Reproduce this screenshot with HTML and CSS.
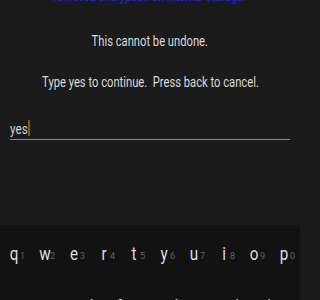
FILE: index.html
```html
<!DOCTYPE html>
<html>
<head>
<meta charset="utf-8">
<link rel="stylesheet" href="styles.css">
</head>
<body>
<div class="screen">
  <div class="content">
    <div class="title"><span class="cond">removed encryption on internal storage.</span></div>
    <div class="msg first"><span class="cond">This cannot be undone.</span></div>
    <div class="msg second"><span class="cond">Type yes to continue.&nbsp; Press back to cancel.</span></div>
    <div class="input"><span class="typed">yes</span><span class="cursor"></span></div>
  </div>
  <div class="kbd">
    <div class="row">
      <div class="key"><span class="ch">q</span><span class="num">1</span></div>
      <div class="key"><span class="ch">w</span><span class="num">2</span></div>
      <div class="key"><span class="ch">e</span><span class="num">3</span></div>
      <div class="key"><span class="ch">r</span><span class="num">4</span></div>
      <div class="key"><span class="ch">t</span><span class="num">5</span></div>
      <div class="key"><span class="ch">y</span><span class="num">6</span></div>
      <div class="key"><span class="ch">u</span><span class="num">7</span></div>
      <div class="key"><span class="ch">i</span><span class="num">8</span></div>
      <div class="key"><span class="ch">o</span><span class="num">9</span></div>
      <div class="key"><span class="ch">p</span><span class="num">0</span></div>
    </div>
    <div class="row row2">
      <div class="key"><span class="ch">a</span></div>
      <div class="key"><span class="ch">s</span></div>
      <div class="key"><span class="ch">d</span></div>
      <div class="key"><span class="ch">f</span></div>
      <div class="key"><span class="ch">g</span></div>
      <div class="key"><span class="ch">h</span></div>
      <div class="key"><span class="ch">j</span></div>
      <div class="key"><span class="ch">k</span></div>
      <div class="key"><span class="ch">l</span></div>
    </div>
  </div>
</div>
</body>
</html>
```
FILE: styles.css
```css
html, body {
  margin: 0;
  padding: 0;
  width: 300px;
  height: 300px;
  overflow: hidden;
  background: #1b1b1b;
}
.screen {
  width: 300px;
  height: 300px;
  display: flex;
  flex-direction: column;
  font-family: Roboto, "Noto Sans", sans-serif;
}
.content {
  height: 225px;
  flex: none;
  background: #1b1b1b;
  overflow: hidden;
}
.cond {
  display: inline-block;
  transform: scaleX(0.8);
  transform-origin: center;
  white-space: pre;
}
.title {
  margin-top: -12px;
  font-size: 14px;
  line-height: 16px;
  color: #2222c8;
  font-weight: 500;
  text-align: center;
  white-space: nowrap;
}
.title .cond {
  transform: scaleX(0.77);
}
.msg {
  font-size: 14px;
  line-height: 16px;
  color: #dadada;
  text-align: center;
  white-space: nowrap;
}
.msg.first { margin-top: 29px; }
.msg.second { margin-top: 25px; }
.input {
  margin: 30px 10px 0;
  height: 18px;
  padding-bottom: 1px;
  border-bottom: 1px solid #b3881a;
  font-size: 15px;
  line-height: 18px;
  color: #cfcfcf;
  display: flex;
  align-items: flex-start;
}
.typed {
  display: inline-block;
  transform: scaleX(0.78);
  transform-origin: left;
  margin-right: -5px;
}
.cursor {
  width: 2px;
  height: 16px;
  background: #7c5c0e;
}
.kbd {
  flex: 1;
  background: #121212;
  padding-top: 17px;
}
.row {
  display: grid;
  grid-template-columns: repeat(10, 30px);
  font-size: 19px;
  line-height: 24px;
  color: #dedede;
}
.row2 {
  margin-top: 26px;
  grid-template-columns: repeat(9, 30px);
  padding-left: 15px;
}
.key {
  padding-left: 8px;
  display: flex;
  align-items: baseline;
}
.ch {
  display: inline-block;
  width: 12px;
  text-align: center;
  transform: scaleX(0.8);
}
.num {
  font-size: 9px;
  color: #606060;
  position: relative;
  top: -1px;
}
```
